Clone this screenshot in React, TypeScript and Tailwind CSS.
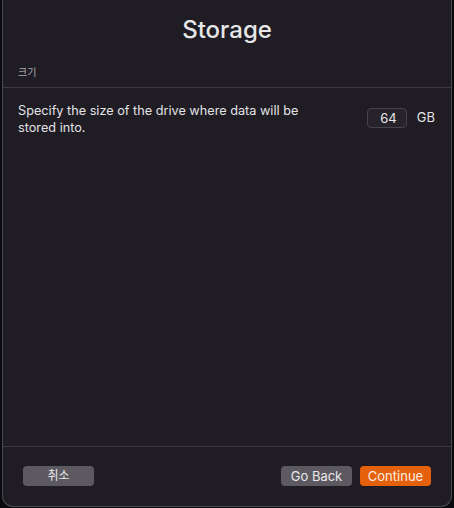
import React from 'react';

const App: React.FC = () => {
  return (
    <div className="w-[454px] h-[508px] bg-[#0b0a0d] font-['Inter','Noto_Sans_CJK_KR',sans-serif]">
      <div className="ml-[2px] w-[450px] h-[507px] flex flex-col bg-[#1f1c24] border-x border-b border-[#4b4851] rounded-b-[11px]">
        <h1 className="pt-[14px] h-[52px] text-center text-[24px] font-medium text-[#e6e6e8] leading-[32px]">
          Storage
        </h1>
        <div className="h-[35px] flex items-end pb-[7px] pl-[15px] text-[10px] text-[#a9a7ad]">크기</div>
        <div className="h-px bg-[#3c3942]" />
        <div className="flex-1 flex items-start pl-[15px] pr-[16px] pt-[14px]">
          <p className="w-[300px] text-[12.7px] leading-[17px] text-[#e3e2e5]">
            Specify the size of the drive where data will be stored into.
          </p>
          <div className="ml-auto mt-[6px] flex items-center">
            <div className="w-[40px] h-[20px] rounded-[4px] border border-[#46434c] bg-[#26232b] text-right pr-[9px] text-[13px] leading-[18px] text-[#e8e7ea]">
              64
            </div>
            <span className="ml-[10px] text-[13px] text-[#e3e2e5]">GB</span>
          </div>
        </div>
        <div className="h-px bg-[#3c3942]" />
        <div className="h-[59px] flex items-center px-[20px] pb-[1px]">
          <button className="w-[71px] h-[20px] rounded-[4px] bg-[#5c5a60] text-[12px] text-[#e8e7ea] leading-[20px]">취소</button>
          <button className="ml-auto w-[71px] h-[20px] rounded-[4px] bg-[#5c5a60] text-[13px] text-[#e8e7ea] leading-[20px]">Go Back</button>
          <button className="ml-[8px] w-[71px] h-[20px] rounded-[4px] bg-[#e5600b] text-[13px] text-[#fbeee4] leading-[20px]">Continue</button>
        </div>
      </div>
    </div>
  );
};

export default App;
